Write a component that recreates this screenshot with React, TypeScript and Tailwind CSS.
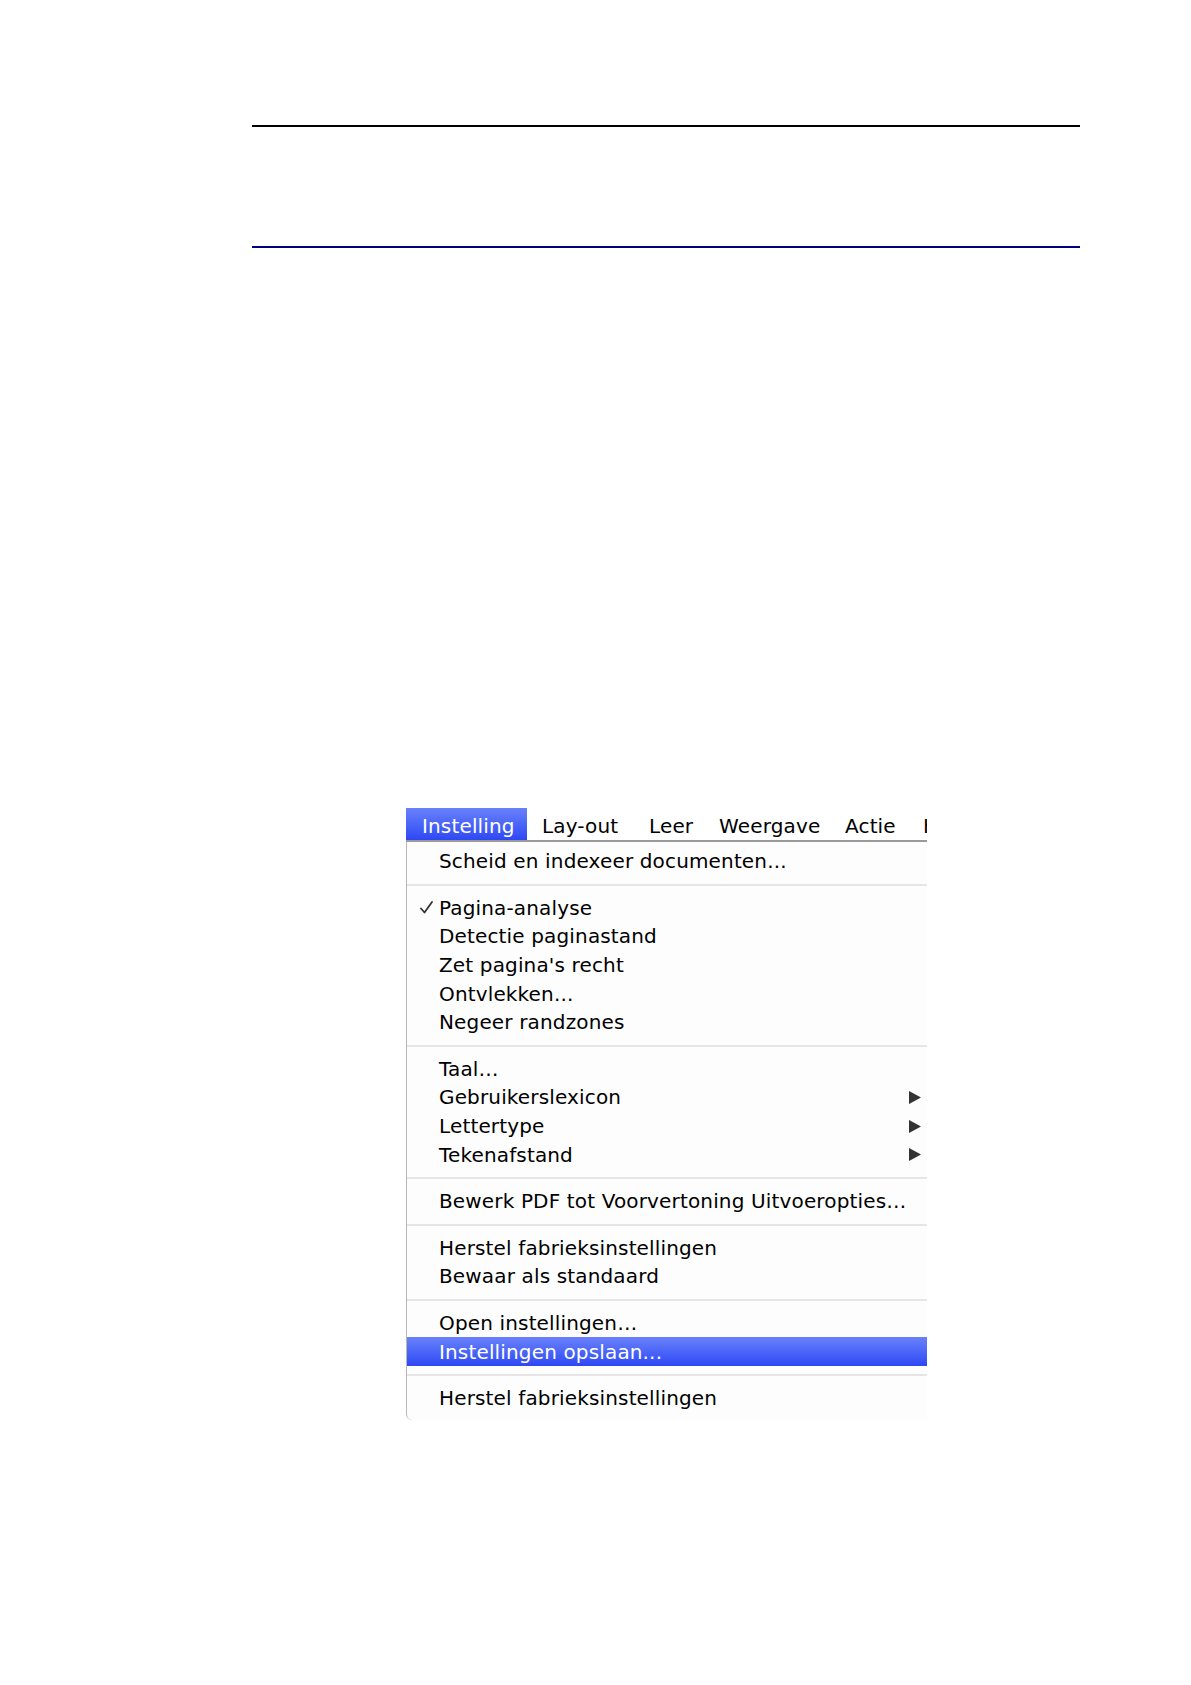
import React from "react";

const font = { fontFamily: '"DejaVu Sans", "Liberation Sans", sans-serif' };

type Item = { label: string; check?: boolean; arrow?: boolean; active?: boolean };

const groups: Item[][] = [
  [{ label: "Scheid en indexeer documenten..." }],
  [
    { label: "Pagina-analyse", check: true },
    { label: "Detectie paginastand" },
    { label: "Zet pagina's recht" },
    { label: "Ontvlekken..." },
    { label: "Negeer randzones" },
  ],
  [
    { label: "Taal…" },
    { label: "Gebruikerslexicon", arrow: true },
    { label: "Lettertype", arrow: true },
    { label: "Tekenafstand", arrow: true },
  ],
  [{ label: "Bewerk PDF tot Voorvertoning Uitvoeropties…" }],
  [{ label: "Herstel fabrieksinstellingen" }, { label: "Bewaar als standaard" }],
  [{ label: "Open instellingen…" }, { label: "Instellingen opslaan...", active: true }],
  [{ label: "Herstel fabrieksinstellingen" }],
];

function Row({ item }: { item: Item }) {
  return (
    <div
      className={
        "relative flex h-[28.6px] items-center pl-[32px] text-[20px] leading-none tracking-[0.15px] " +
        (item.active
          ? "bg-gradient-to-b from-[#6a80fa] to-[#2f46f4] text-white"
          : "text-black")
      }
    >
      {item.check && (
        <svg
          className="absolute left-[13px] top-[7px]"
          width="13"
          height="13"
          viewBox="0 0 13 13"
        >
          <polyline
            points="1,7.5 4.5,11.5 12,1"
            fill="none"
            stroke="#333"
            strokeWidth="1.8"
            strokeLinecap="round"
            strokeLinejoin="round"
          />
        </svg>
      )}
      <span className="whitespace-nowrap">{item.label}</span>
      {item.arrow && (
        <svg
          className="absolute left-[502px] top-[8px]"
          width="12"
          height="13"
          viewBox="0 0 12 13"
        >
          <polygon points="0,0 12,6.5 0,13" fill="#333" />
        </svg>
      )}
    </div>
  );
}

export default function App() {
  const bar = [
    { label: "Instelling", w: "w-[121px] pl-[16px]", active: true },
    { label: "Lay-out", w: "w-[107px] pl-[15px]" },
    { label: "Leer", w: "w-[70px] pl-[15px]" },
    { label: "Weergave", w: "w-[126px] pl-[15px]" },
    { label: "Actie", w: "w-[78px] pl-[15px]" },
    { label: "Help", w: "w-[80px] pl-[15px]" },
  ];
  return (
    <div className="h-[1685px] w-[1191px] bg-white" style={font}>
      <div className="pt-[125px]">
        <div className="ml-[252px] h-[2px] w-[828px] bg-black" />
        <div className="ml-[252px] mt-[119px] h-[2px] w-[828px] bg-[#000080]" />
      </div>

      <div className="ml-[406px] mt-[560px] w-[521px] overflow-hidden">
        {/* menu bar */}
        <div className="flex h-[34px] border-b-2 border-[#9a9a9a] bg-white">
          {bar.map((b) => (
            <div
              key={b.label}
              className={
                "flex shrink-0 items-center pt-[4px] text-[20px] leading-none tracking-[0.15px] " +
                b.w +
                (b.active
                  ? " bg-gradient-to-b from-[#6a80fa] to-[#2f46f4] text-white"
                  : " text-black")
              }
            >
              {b.label}
            </div>
          ))}
        </div>
        {/* dropdown */}
        <div className="rounded-bl-[6px] border-l border-[#b8b8b8] bg-[#fdfdfd] pb-[7px] pt-[5px]">
          {groups.map((g, gi) => (
            <div key={gi}>
              {gi > 0 && (
                <div className="flex h-[18px] items-center">
                  <div className="h-[2px] w-full bg-[#e6e6e6]" />
                </div>
              )}
              {g.map((it, ii) => (
                <Row key={ii} item={it} />
              ))}
            </div>
          ))}
        </div>
      </div>
    </div>
  );
}
